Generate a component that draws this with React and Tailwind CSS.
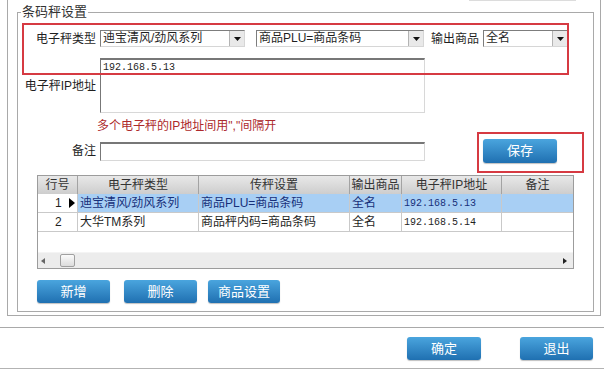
import React from 'react';

const sans = "font-[family-name:'Liberation_Sans','Noto_Sans_CJK_SC',sans-serif]";
const mono = "font-[family-name:'Liberation_Mono','Noto_Sans_CJK_SC',monospace]";

const DownArrow = () => (
  <svg width="7" height="4" viewBox="0 0 7 4"><path d="M0 0h7L3.5 4z" fill="#111" /></svg>
);

const Select = ({ value, width }) => (
  <div className={`flex h-[17px] ${width} border-t border-l border-[#7d7d7d] border-b border-r border-b-[#d6d6d6] border-r-[#d6d6d6] bg-white`}>
    <span className="flex-1 pl-[2px] leading-[15px] whitespace-nowrap overflow-hidden">{value}</span>
    <span className="w-[15px] flex items-center justify-center bg-[#e9e9e9] border-l border-[#b4b4b4]">
      <DownArrow />
    </span>
  </div>
);

const BlueButton = ({ children, className = '' }) => (
  <button className={`flex items-center justify-center rounded-[3px] bg-linear-to-b from-[#4aa5de] to-[#1f70b1] text-white text-[13px] shadow-[0_1px_1px_rgba(0,0,0,0.25)] ${className}`}>
    {children}
  </button>
);

const cols = 'grid grid-cols-[40px_121px_151px_52px_100px_71px]';

const rows = [
  { no: '1', type: '迪宝清风/劲风系列', setting: '商品PLU=商品条码', out: '全名', ip: '192.168.5.13', note: '', selected: true },
  { no: '2', type: '大华TM系列', setting: '商品秤内码=商品条码', out: '全名', ip: '192.168.5.14', note: '' },
];

export default function App() {
  return (
    <div className={`relative w-[604px] h-[373px] overflow-hidden bg-white text-[12px] text-[#1f1f1f] ${sans}`}>
      {/* outer frame */}
      <div className="ml-[7px] w-[594px] border-x border-b border-[#a9a9a9] pl-[9px] pr-[6px] pb-[3px]">
        <div className="h-px ml-[452px] w-[107px] bg-[#dcdcdc]" />
        <fieldset className="mt-[3px] border border-[#a9a9a9]">
          <legend className="ml-[3px] px-[1px] text-[13px] leading-[16px] text-[#333]">条码秤设置</legend>
          <div className="flex flex-col pb-[8px]">
            {/* row 1 */}
            <div className="mt-[10px] h-[17px] flex items-center">
              <span className="w-[78px] text-right">电子秤类型</span>
              <div className="ml-[4px]"><Select value="迪宝清风/劲风系列" width="w-[145px]" /></div>
              <div className="ml-[11px]"><Select value="商品PLU=商品条码" width="w-[168px]" /></div>
              <span className="ml-[7px] w-[48px]">输出商品</span>
              <div className="ml-[4px]"><Select value="全名" width="w-[85px]" /></div>
            </div>

            {/* ip */}
            <div className="mt-[11px] flex">
              <span className="w-[78px] text-right self-center">电子秤IP地址</span>
              <div className="ml-[4px] w-[325px] h-[55px] bg-white border-t-2 border-l border-[#777] border-r border-b border-r-[#d8d8d8] border-b-[#d8d8d8]">
                <span className={`block pl-[2px] pt-[1px] text-[10px] leading-[14px] ${mono}`}>192.168.5.13</span>
              </div>
            </div>
            <div className="mt-[6px] pl-[79px] leading-[14px] text-[#ad2a2c]">多个电子秤的IP地址间用","间隔开</div>

            {/* note + save */}
            <div className="mt-[6px] h-[24px] flex items-center">
              <span className="w-[78px] text-right">备注</span>
              <div className="ml-[4px] w-[325px] h-[19px] bg-white border-t-2 border-l border-[#777] border-r border-b border-r-[#d8d8d8] border-b-[#d8d8d8]" />
              <BlueButton className="ml-[58px] w-[74px] h-[24px]">保存</BlueButton>
            </div>

            {/* table */}
            <div className="mt-[12px] ml-[19px] w-[537px] border border-[#9c9c9c] bg-white">
              <div className={`${cols} h-[18px] bg-linear-to-b from-[#e8e8e8] to-[#cdcdcd] text-[#333]`}>
                {['行号', '电子秤类型', '传秤设置', '输出商品', '电子秤IP地址', '备注'].map((h, i) => (
                  <div key={h} className={`flex items-center justify-center leading-none whitespace-nowrap ${i < 5 ? 'border-r border-[#a3a3a3]' : ''}`}>{h}</div>
                ))}
              </div>
              {rows.map(r => {
                const cell = `flex items-center pl-[2px] border-r border-b border-[#c9c9c9] whitespace-nowrap overflow-hidden ${r.selected ? 'bg-[#a8cff4] text-[#17307a]' : ''}`;
                return (
                  <div key={r.no} className={`${cols} h-[19px]`}>
                    <div className="flex items-center pl-[17px] pr-[2px] border-r border-b border-[#c9c9c9]">
                      <span>{r.no}</span>
                      {r.selected && (
                        <svg className="ml-auto" width="6" height="10" viewBox="0 0 6 10"><path d="M0 0l6 5-6 5z" fill="#000" /></svg>
                      )}
                    </div>
                    <div className={cell}>{r.type}</div>
                    <div className={cell}>{r.setting}</div>
                    <div className={cell}>{r.out}</div>
                    <div className={`${cell} text-[10px] ${mono}`}>{r.ip}</div>
                    <div className={`${cell} border-r-0`}>{r.note}</div>
                  </div>
                );
              })}
              <div className="h-[20px]" />
              <div className="h-[16px] flex items-center bg-[#ececec] border-t border-[#f4f4f4]">
                <svg className="ml-[3px]" width="4" height="6" viewBox="0 0 4 6"><path d="M4 0v6L0 3z" fill="#666" /></svg>
                <div className="ml-[15px] w-[15px] h-[13px] rounded-[2px] border border-[#a0a0a0] bg-linear-to-b from-[#fbfbfb] to-[#dcdcdc]" />
                <svg className="ml-auto mr-[6px]" width="4" height="6" viewBox="0 0 4 6"><path d="M0 0v6l4-3z" fill="#222" /></svg>
              </div>
            </div>

            {/* action buttons */}
            <div className="mt-[11px] ml-[19px] flex">
              <BlueButton className="w-[73px] h-[23px]">新增</BlueButton>
              <BlueButton className="ml-[14px] w-[73px] h-[23px]">删除</BlueButton>
              <BlueButton className="ml-[11px] w-[72px] h-[23px]">商品设置</BlueButton>
            </div>
          </div>
        </fieldset>
      </div>

      {/* footer */}
      <div className="mt-[11px] h-px bg-[#a9a9a9]" />
      <div className="mt-[9px] flex">
        <BlueButton className="ml-[407px] w-[74px] h-[23px]">确定</BlueButton>
        <BlueButton className="ml-[39px] w-[73px] h-[23px]">退出</BlueButton>
      </div>
      <div className="mt-[8px] h-px bg-[#b3b3b3]" />

      {/* red annotation boxes */}
      <div className="absolute left-[22px] top-[23px] w-[547px] h-[52px] border-2 border-[#d63a42]" />
      <div className="absolute left-[477px] top-[132px] w-[107px] h-[41px] border-2 border-[#d63a42]" />
    </div>
  );
}
